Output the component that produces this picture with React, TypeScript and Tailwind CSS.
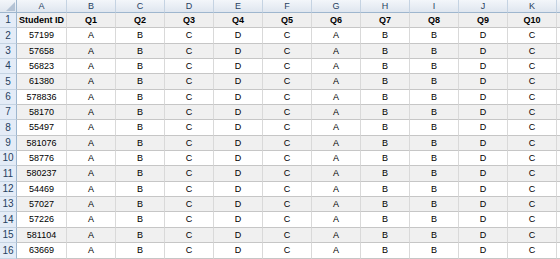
import React from "react";

const cols = ["A", "B", "C", "D", "E", "F", "G", "H", "I", "J", "K"];
const ids = [
  "57199", "57658", "56823", "61380", "578836", "58170", "55497", "581076",
  "58776", "580237", "54469", "57027", "57226", "581104", "63669",
];
const answers = ["A", "B", "C", "D", "C", "A", "B", "B", "D", "C"];
const heights = [
  "h-[15px]", "h-[16px]", "h-[15px]", "h-[15px]", "h-[16px]", "h-[15px]", "h-[15px]", "h-[16px]",
  "h-[15px]", "h-[15px]", "h-[16px]", "h-[15px]", "h-[15px]", "h-[16px]", "h-[15px]", "h-[16px]",
];

function Row({ label, cells, h, bg, bold }: { label: string; cells: string[]; h: string; bg: string; bold?: boolean }) {
  return (
    <div className={`flex ${h}`}>
      <div className="w-[17px] shrink-0 flex items-center justify-center bg-[#e4ecf7] border-r border-b border-r-[#9eb6ce] border-b-[#c5d3e2] text-[#27415f] text-[10px]">
        {label}
      </div>
      {cells.map((c, i) => (
        <div
          key={i}
          className={`${i === 0 ? "w-[50px]" : "w-[49px]"} shrink-0 flex items-center justify-center border-r border-b border-r-[#d9d9d9] border-b-[#c6c6c6] ${bg} ${bold ? "font-bold" : ""} text-[#000]`}
        >
          {c}
        </div>
      ))}
      <div className={`flex-1 border-b border-b-[#c6c6c6] ${bg}`} />
    </div>
  );
}

export default function App() {
  return (
    <div className="w-[560px] h-[259px] overflow-hidden bg-white font-['Liberation_Sans',Arial,sans-serif] text-[9px] leading-none">
      <div className="flex h-[13px]">
        <div className="relative w-[17px] shrink-0 bg-linear-to-b from-[#f3f6fa] to-[#dfe6ef] border-r border-b border-r-[#9eb6ce] border-b-[#9eb6ce]">
          <svg className="absolute right-[1px] bottom-[1px]" width="9" height="9" viewBox="0 0 9 9">
            <polygon points="9,0 9,9 0,9" fill="#b4c3d5" />
          </svg>
        </div>
        {cols.map((c, i) => (
          <div
            key={c}
            className={`${i === 0 ? "w-[50px]" : "w-[49px]"} shrink-0 flex items-center justify-center bg-linear-to-b from-[#f3f6fa] to-[#dfe6ef] border-r border-b border-r-[#c5d3e2] border-b-[#9eb6ce] text-[#27415f]`}
          >
            {c}
          </div>
        ))}
        <div className="flex-1 bg-linear-to-b from-[#f3f6fa] to-[#dfe6ef] border-b border-b-[#9eb6ce]" />
      </div>
      <Row
        label="1"
        h={heights[0]}
        bg="bg-[#efefef]"
        bold
        cells={["Student ID", "Q1", "Q2", "Q3", "Q4", "Q5", "Q6", "Q7", "Q8", "Q9", "Q10"]}
      />
      {ids.map((id, r) => (
        <Row
          key={id}
          label={String(r + 2)}
          h={heights[r + 1]}
          bg={r % 2 === 0 ? "bg-white" : "bg-[#f0f0f0]"}
          cells={[id, ...answers]}
        />
      ))}
    </div>
  );
}
